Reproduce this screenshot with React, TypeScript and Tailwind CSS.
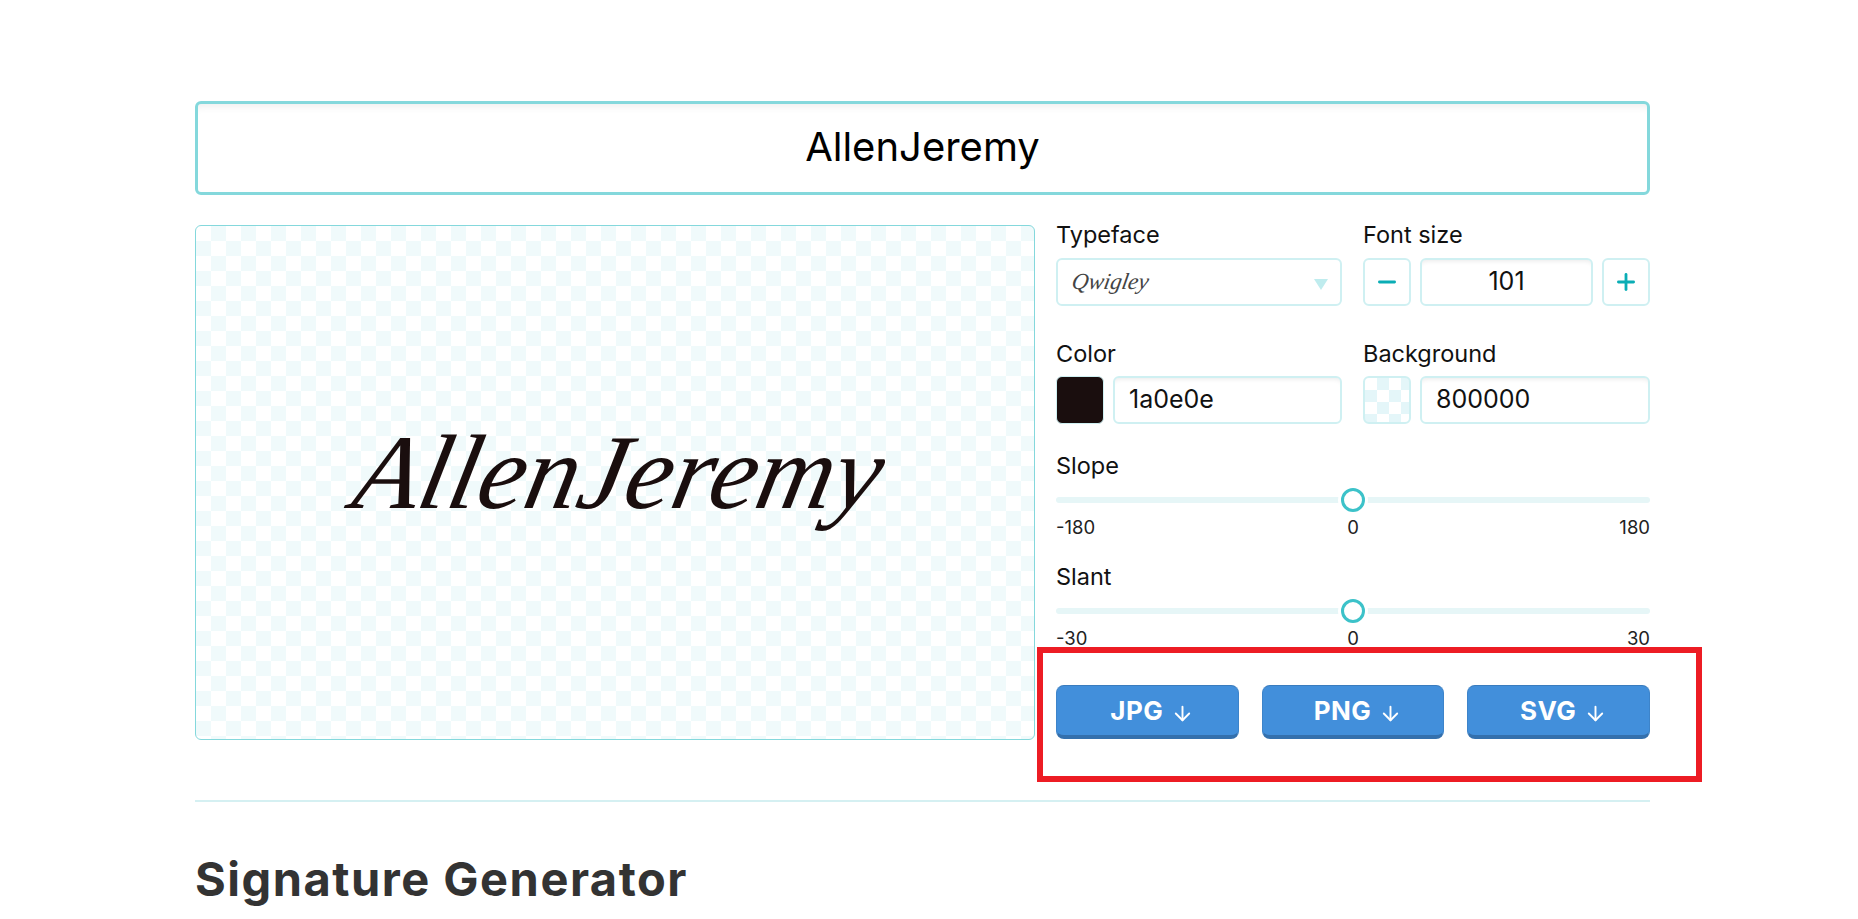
import { ArrowDown, Minus, Plus } from 'lucide-react';

const font = "font-['Inter','Noto_Sans',sans-serif]";

function Label({ children }: { children: string }) {
  return <div className="h-[32px] text-[23.5px] leading-[34px] text-[#111]">{children}</div>;
}

function Field({ value, className = '' }: { value: string; className?: string }) {
  return (
    <div
      className={`flex h-[48px] items-center rounded-[6px] border-2 border-[#cff0f2] bg-white px-[14px] text-[25px] text-[#111] shadow-[inset_0_5px_5px_-4px_rgba(0,0,0,0.09)] ${className}`}
    >
      {value}
    </div>
  );
}

function Slider({ label, min, max }: { label: string; min: string; max: string }) {
  return (
    <div>
      <Label>{label}</Label>
      <div className="relative mt-[7px] flex h-[24px] items-center justify-center">
        <div className="h-[6px] w-full rounded-full bg-[#e6f6f7]" />
        <div className="absolute left-[285px] top-0 h-[24px] w-[24px] rounded-full border-[3px] border-[#3cc2c9] bg-white shadow-[0_0_0_3px_#fff]" />
      </div>
      <div className="mt-[5px] grid h-[20px] grid-cols-3 items-center text-[18.5px] leading-[20px] text-[#222]">
        <span>{min}</span>
        <span className="text-center">0</span>
        <span className="text-right">{max}</span>
      </div>
    </div>
  );
}

function DownloadButton({ label }: { label: string }) {
  return (
    <button className="flex h-[54px] items-center justify-center gap-[8px] rounded-[8px] border-x border-t border-b-[4px] border-x-[#3d84ca] border-t-[#3a7cbe] border-b-[#3470ad] bg-[#428fdb] pl-[10px] text-[26px] font-bold tracking-[0.5px] text-white">
      {label}
      <ArrowDown size={23} strokeWidth={2} className="mt-[5px]" />
    </button>
  );
}

export default function App() {
  return (
    <div className={`relative h-[919px] overflow-hidden bg-white ${font}`}>
      <div className="ml-[195px] w-[1455px] pt-[101px]">
        <div className="flex h-[94px] items-center justify-center rounded-[6px] border-[3px] border-[#84d8dc] bg-white pb-[2px] text-[40px] text-black shadow-[inset_0_10px_8px_-8px_rgba(0,0,0,0.08)]">
          AllenJeremy
        </div>

        <div className="mt-[23px] flex items-start gap-[21px]">
          <div className="mt-[7px] flex h-[515px] w-[840px] shrink-0 items-center justify-center rounded-[6px] border border-[#84d8dc] bg-[conic-gradient(#f0fafb_25%,#fff_0_50%,#f0fafb_0_75%,#fff_0)] bg-[length:30px_30px]">
            <span className="ml-[10px] mt-[-20px] -skew-x-[12deg] font-['Liberation_Serif',serif] text-[106px] italic leading-none text-[#1a0e0e]">
              AllenJeremy
            </span>
          </div>

          <div className="w-[594px]">
            <div className="grid grid-cols-[286px_287px] gap-x-[21px]">
              <div>
                <Label>Typeface</Label>
                <div className="mt-[8px] flex h-[48px] items-center justify-between rounded-[6px] border-2 border-[#cff0f2] bg-white pl-[14px] pr-[12px]">
                  <span className="-skew-x-[10deg] font-['Liberation_Serif',serif] text-[23px] italic text-[#444]">Qwigley</span>
                  <span className="mt-[4px] h-0 w-0 border-x-[7px] border-t-[11px] border-x-transparent border-t-[#bfecee]" />
                </div>
              </div>
              <div>
                <Label>Font size</Label>
                <div className="mt-[8px] flex gap-[9px]">
                  <button className="flex h-[48px] w-[48px] shrink-0 items-center justify-center rounded-[6px] border-2 border-[#cff0f2] bg-white text-[#0aadb5]">
                    <Minus size={26} strokeWidth={2.6} />
                  </button>
                  <Field value="101" className="flex-1 justify-center" />
                  <button className="flex h-[48px] w-[48px] shrink-0 items-center justify-center rounded-[6px] border-2 border-[#cff0f2] bg-white text-[#0aadb5]">
                    <Plus size={26} strokeWidth={2.6} />
                  </button>
                </div>
              </div>

              <div className="mt-[31px]">
                <Label>Color</Label>
                <div className="mt-[7px] flex gap-[9px]">
                  <div className="h-[48px] w-[48px] shrink-0 rounded-[6px] border border-[#cff0f2] bg-[#1a0e0e]" />
                  <Field value="1a0e0e" className="flex-1" />
                </div>
              </div>
              <div className="mt-[31px]">
                <Label>Background</Label>
                <div className="mt-[7px] flex gap-[9px]">
                  <div className="h-[48px] w-[48px] shrink-0 rounded-[6px] border-2 border-[#cff0f2] bg-[conic-gradient(#e4f6f9_25%,#fff_0_50%,#e4f6f9_0_75%,#fff_0)] bg-[length:24px_24px]" />
                  <Field value="800000" className="flex-1" />
                </div>
              </div>
            </div>

            <div className="mt-[25px]">
              <Slider label="Slope" min="-180" max="180" />
            </div>
            <div className="mt-[23px]">
              <Slider label="Slant" min="-30" max="30" />
            </div>

            <div className="mt-[37px] grid grid-cols-3 gap-[23px]">
              <DownloadButton label="JPG" />
              <DownloadButton label="PNG" />
              <DownloadButton label="SVG" />
            </div>
          </div>
        </div>

        <div className="mt-[60px] h-[2px] bg-[#d5f0f2]" />

        <h1 className="mt-[47px] text-[47px] font-bold leading-[60px] tracking-[1.5px] text-[#333]">Signature Generator</h1>
      </div>

      {/* red annotation box drawn over the page */}
      <div className="absolute left-[1037px] top-[647px] h-[135px] w-[665px] border-[6px] border-[#ed1c24]" />
    </div>
  );
}
